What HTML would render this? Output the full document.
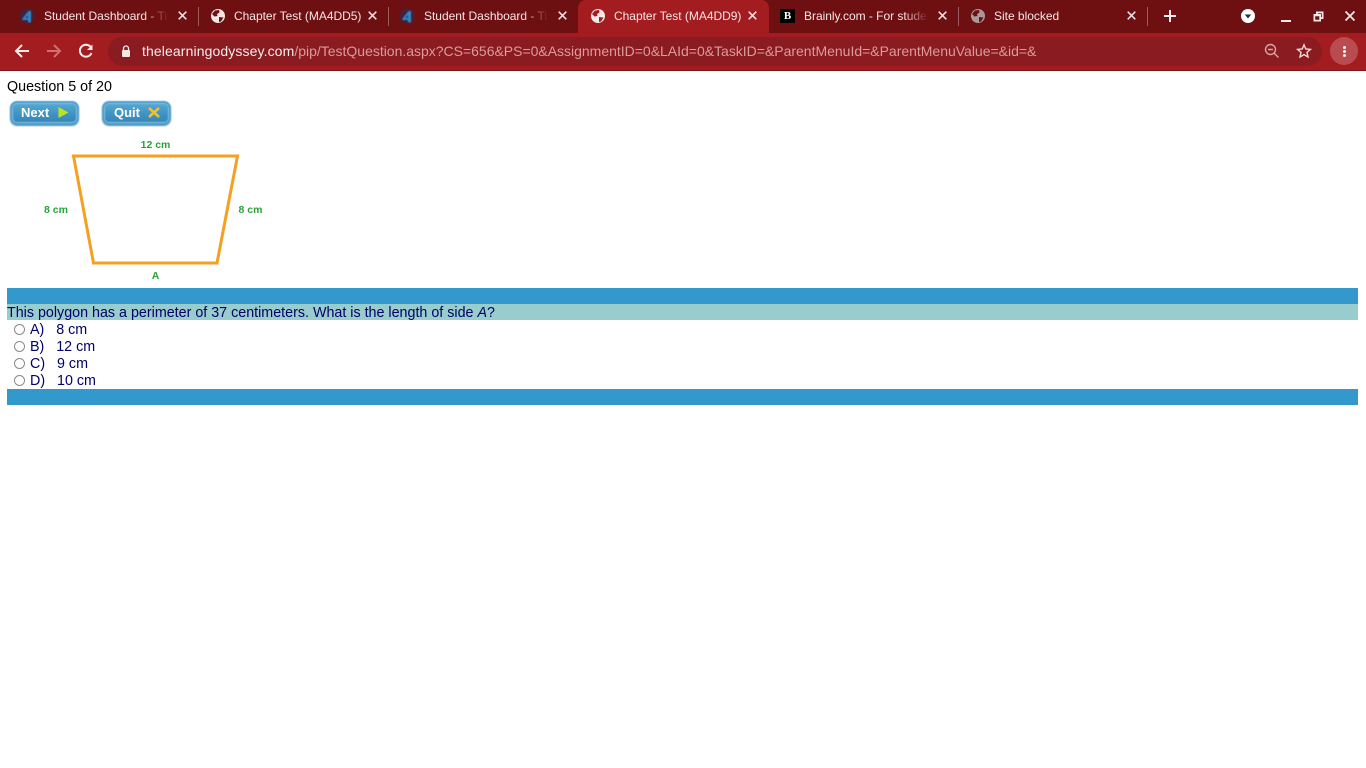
<!DOCTYPE html>
<html>
<head>
<meta charset="utf-8">
<style>
html,body{margin:0;padding:0;width:1366px;height:768px;overflow:hidden;background:#fff;font-family:"Liberation Sans",sans-serif}
.a{position:absolute}
.t{position:absolute;white-space:nowrap;top:8.5px;font-size:12px;line-height:15px;color:#f6e6e6;letter-spacing:-0.02px;overflow:hidden}
.fade{-webkit-mask-image:linear-gradient(90deg,#000 78%,transparent 97%);mask-image:linear-gradient(90deg,#000 78%,transparent 97%)}
.sep{position:absolute;top:7px;width:1px;height:19px;background:#9a5c5c}
.q{position:absolute;left:30px;font-size:14.3px;line-height:17px;color:#000066;white-space:pre}
.r{position:absolute;left:14px;width:9px;height:9px;border:1px solid #8a8a8a;border-radius:50%;background:#fff}
.btn{position:absolute;top:101px;width:65px;height:20px;border:2px solid #4a9ccb;border-radius:7px;background:linear-gradient(#5aa8d2,#3f93c4 55%,#3585b8);box-shadow:inset 0 0 0 1px #86c4e4,0 1px 1px #5d8fab;filter:blur(0.45px)}
</style>
</head>
<body>
<div class="a" style="left:0;top:0;width:1366px;height:33px;background:#6e1012"></div>
<div class="a" style="left:0;top:33px;width:1366px;height:37px;background:#a31c20"></div>
<div class="a" style="left:0;top:70px;width:1366px;height:1px;background:#7c1518"></div>

<!-- active tab -->
<div class="a" style="left:578px;top:0;width:191px;height:33px;background:#a31c20;border-radius:8px 8px 0 0"></div>

<!-- tab 1 -->
<svg class="a" style="left:19px;top:8px;filter:blur(0.5px)" width="16" height="16" viewBox="0 0 16 16"><circle cx="8" cy="8" r="7.500" fill="#452238"/><path d="M9.500 3 L3.500 10.500 L3.500 12 L9 12 L9 14.500 L12 14.500 L12 3Z" fill="#2d86c8"/><path d="M8.800 7 L6.500 10 L8.800 10Z" fill="#4a2a4c"/></svg>
<div class="t fade" style="left:44px;width:128px">Student Dashboard - Tin</div>
<svg class="a" style="left:178.200px;top:11.300px" width="9" height="9" viewBox="0 0 9 9"><path d="M0.700 0.700L8.300 8.300M8.300 0.700L0.700 8.300" stroke="#f4e4e4" stroke-width="1.500"/></svg>
<div class="sep" style="left:198px"></div>

<!-- tab 2 -->
<svg class="a" style="left:211px;top:9px" width="14" height="14" viewBox="0 0 14 14"><circle cx="7" cy="7" r="7" fill="#f3e6e6"/><path d="M4 1.500 L8 1 L8.500 3.500 L6 5 L6.500 7 L3.500 7.500 L1 5Z M8 8 L12.500 8.500 L10 12.500 L8 13Z" fill="#6e1012"/></svg>
<div class="t" style="left:234px">Chapter Test (MA4DD5)</div>
<svg class="a" style="left:368.200px;top:11.300px" width="9" height="9" viewBox="0 0 9 9"><path d="M0.700 0.700L8.300 8.300M8.300 0.700L0.700 8.300" stroke="#f4e4e4" stroke-width="1.500"/></svg>
<div class="sep" style="left:388px"></div>

<!-- tab 3 -->
<svg class="a" style="left:399px;top:8px;filter:blur(0.5px)" width="16" height="16" viewBox="0 0 16 16"><circle cx="8" cy="8" r="7.500" fill="#452238"/><path d="M9.500 3 L3.500 10.500 L3.500 12 L9 12 L9 14.500 L12 14.500 L12 3Z" fill="#2d86c8"/><path d="M8.800 7 L6.500 10 L8.800 10Z" fill="#4a2a4c"/></svg>
<div class="t fade" style="left:424px;width:128px">Student Dashboard - Tin</div>
<svg class="a" style="left:558.200px;top:11.300px" width="9" height="9" viewBox="0 0 9 9"><path d="M0.700 0.700L8.300 8.300M8.300 0.700L0.700 8.300" stroke="#f4e4e4" stroke-width="1.500"/></svg>

<!-- tab 4 active -->
<svg class="a" style="left:591px;top:9px" width="14" height="14" viewBox="0 0 14 14"><circle cx="7" cy="7" r="7" fill="#f5e8e8"/><path d="M4 1.500 L8 1 L8.500 3.500 L6 5 L6.500 7 L3.500 7.500 L1 5Z M8 8 L12.500 8.500 L10 12.500 L8 13Z" fill="#a31c20"/></svg>
<div class="t" style="left:614px">Chapter Test (MA4DD9)</div>
<svg class="a" style="left:748.200px;top:11.300px" width="9" height="9" viewBox="0 0 9 9"><path d="M0.700 0.700L8.300 8.300M8.300 0.700L0.700 8.300" stroke="#f4e4e4" stroke-width="1.500"/></svg>

<!-- tab 5 -->
<div class="a" style="left:780px;top:9px;width:15px;height:14px;background:#000;color:#fff;font:bold 11px/14px 'Liberation Serif',serif;text-align:center">B</div>
<div class="t fade" style="left:804px;width:128px">Brainly.com - For students</div>
<svg class="a" style="left:938.200px;top:11.300px" width="9" height="9" viewBox="0 0 9 9"><path d="M0.700 0.700L8.300 8.300M8.300 0.700L0.700 8.300" stroke="#f4e4e4" stroke-width="1.500"/></svg>
<div class="sep" style="left:958px"></div>

<!-- tab 6 -->
<svg class="a" style="left:971px;top:9px" width="14" height="14" viewBox="0 0 14 14"><circle cx="7" cy="7" r="7" fill="#a89a9c"/><path d="M4 1.500 L8 1 L8.500 3.500 L6 5 L6.500 7 L3.500 7.500 L1 5Z M8 8 L12.500 8.500 L10 12.500 L8 13Z" fill="#6e1012"/></svg>
<div class="t" style="left:994px">Site blocked</div>
<svg class="a" style="left:1127.200px;top:11.300px" width="9" height="9" viewBox="0 0 9 9"><path d="M0.700 0.700L8.300 8.300M8.300 0.700L0.700 8.300" stroke="#f4e4e4" stroke-width="1.500"/></svg>
<div class="sep" style="left:1147px"></div>

<!-- new tab -->
<svg class="a" style="left:1163px;top:9px" width="14" height="14" viewBox="0 0 14 14"><path d="M7 1V13M1 7H13" stroke="#f8ecec" stroke-width="2"/></svg>

<!-- profile/window controls -->
<svg class="a" style="left:1241px;top:9px" width="14" height="14" viewBox="0 0 14 14"><circle cx="7" cy="7" r="7" fill="#fff"/><path d="M3.800 5.500H10.200L7 9.500Z" fill="#3a2a2a"/></svg>
<div class="a" style="left:1281px;top:20px;width:10px;height:2px;background:#f6e6e6"></div>
<svg class="a" style="left:1313px;top:11px" width="11" height="11" viewBox="0 0 11 11"><path fill-rule="evenodd" d="M3 0.500H10.500V8H8V10.500H0.500V3H3Z M2.200 5.200V8.800H6.300V5.200Z M5 2.200V3H8V6.300H8.800V2.200Z" fill="#f6e6e6"/></svg>
<svg class="a" style="left:1345px;top:11px" width="10" height="10" viewBox="0 0 10 10"><path d="M0.500 0.500L9.500 9.500M9.500 0.500L0.500 9.500" stroke="#f6e6e6" stroke-width="1.800"/></svg>

<!-- nav -->
<svg class="a" style="left:14px;top:43px" width="16" height="16" viewBox="0 0 16 16"><path d="M15 8H2.500M8 2L2 8L8 14" fill="none" stroke="#fbeaea" stroke-width="2"/></svg>
<svg class="a" style="left:46px;top:43px" width="16" height="16" viewBox="0 0 16 16"><path d="M1 8H13.500M8 2L14 8L8 14" fill="none" stroke="#d07070" stroke-width="2"/></svg>
<svg class="a" style="left:78px;top:43px" width="16" height="16" viewBox="0 0 16 16"><path d="M13.500 10A6 6 0 1 1 13 4.500" fill="none" stroke="#fbeaea" stroke-width="2"/><path d="M14.500 1.500V7H9Z" fill="#fbeaea"/></svg>

<!-- omnibox -->
<div class="a" style="left:108px;top:37px;width:1214px;height:29px;border-radius:15px;background:#8a1b20"></div>
<svg class="a" style="left:120px;top:45px" width="12" height="13" viewBox="0 0 12 13"><path d="M3.500 5V3.500a2.500 2.500 0 0 1 5 0V5" fill="none" stroke="#f6e6e6" stroke-width="1.300"/><rect x="2" y="5" width="8" height="7" rx="1" fill="#f6e6e6"/></svg>
<div class="a" style="left:142px;top:43px;font-size:14px;line-height:16px;color:#dc9a9c;white-space:nowrap;letter-spacing:-0.01px"><span style="color:#f8ecec;letter-spacing:0.11px">thelearningodyssey.com</span>/pip/TestQuestion.aspx?CS=656&amp;PS=0&amp;AssignmentID=0&amp;LAId=0&amp;TaskID=&amp;ParentMenuId=&amp;ParentMenuValue=&amp;id=&amp;</div>
<svg class="a" style="left:1264px;top:43px" width="16" height="16" viewBox="0 0 16 16"><circle cx="6.500" cy="6.500" r="5" fill="none" stroke="#d9a4a6" stroke-width="1.400"/><path d="M10 10L14.500 14.500M4 6.500H9" stroke="#d9a4a6" stroke-width="1.400"/></svg>
<svg class="a" style="left:1296px;top:43px" width="16" height="16" viewBox="0 0 16 16"><path d="M8 1.800L9.800 6L14.500 6.400L11 9.400L12 14L8 11.600L4 14L5 9.400L1.500 6.400L6.200 6Z" fill="none" stroke="#f0d8d8" stroke-width="1.400"/></svg>
<div class="a" style="left:1330px;top:37px;width:28px;height:28px;border-radius:50%;background:#b84c50"></div>
<div class="a" style="left:1342.500px;top:46px;width:3px;height:3px;border-radius:50%;background:#fbeaea"></div>
<div class="a" style="left:1342.500px;top:50px;width:3px;height:3px;border-radius:50%;background:#fbeaea"></div>
<div class="a" style="left:1342.500px;top:54px;width:3px;height:3px;border-radius:50%;background:#fbeaea"></div>

<!-- page -->
<div class="a" style="left:7px;top:79px;font-size:14.3px;line-height:17px;color:#000;white-space:nowrap">Question 5 of 20</div>

<!-- buttons -->
<div class="btn" style="left:10px"></div>
<div class="a" style="left:21px;top:105px;font-size:13px;line-height:15px;font-weight:bold;color:#fff;white-space:nowrap;filter:blur(0.3px)">Next</div>
<svg class="a" style="left:58px;top:107px;filter:blur(0.3px)" width="11" height="11" viewBox="0 0 11 11"><path d="M0.500 0L10.500 5.500L0.500 11Z" fill="#bce41e"/></svg>
<div class="btn" style="left:102px"></div>
<div class="a" style="left:114px;top:105px;font-size:13px;line-height:15px;font-weight:bold;color:#fff;white-space:nowrap;filter:blur(0.3px)">Quit</div>
<svg class="a" style="left:148px;top:107px;filter:blur(0.3px)" width="12" height="11" viewBox="0 0 12 11"><path d="M1 1L11 10M11 1L1 10" stroke="#f0c030" stroke-width="2.600"/></svg>

<!-- figure -->
<svg class="a" style="left:30px;top:134px;filter:blur(0.25px)" width="250" height="150" viewBox="0 0 250 150">
<path d="M43.500 22H207.500L187 129H63.500Z" fill="none" stroke="#f5a020" stroke-width="3"/>
<text x="125.500" y="14" text-anchor="middle" font-family="Liberation Sans" font-size="10.500" font-weight="bold" fill="#2aa23a">12 cm</text>
<text x="26" y="79" text-anchor="middle" font-family="Liberation Sans" font-size="10.500" font-weight="bold" fill="#2aa23a">8 cm</text>
<text x="220.500" y="79" text-anchor="middle" font-family="Liberation Sans" font-size="10.500" font-weight="bold" fill="#2aa23a">8 cm</text>
<text x="125.500" y="145" text-anchor="middle" font-family="Liberation Sans" font-size="10.500" font-weight="bold" fill="#2aa23a">A</text>
</svg>

<div class="a" style="left:7px;top:288px;width:1351px;height:16px;background:#3399cc"></div>
<div class="a" style="left:7px;top:304px;width:1351px;height:16px;background:#99cccc"></div>
<div class="a" style="left:7px;top:305px;font-size:14.3px;line-height:16px;color:#000066;white-space:nowrap">This polygon has a perimeter of 37 centimeters. What is the length of side <i>A</i>?</div>

<div class="r" style="top:324px"></div><div class="q" style="top:322px">A)   8 cm</div>
<div class="r" style="top:341px"></div><div class="q" style="top:339px">B)   12 cm</div>
<div class="r" style="top:358px"></div><div class="q" style="top:356px">C)   9 cm</div>
<div class="r" style="top:375px"></div><div class="q" style="top:373px">D)   10 cm</div>

<div class="a" style="left:7px;top:389px;width:1351px;height:16px;background:#3399cc"></div>
</body>
</html>
